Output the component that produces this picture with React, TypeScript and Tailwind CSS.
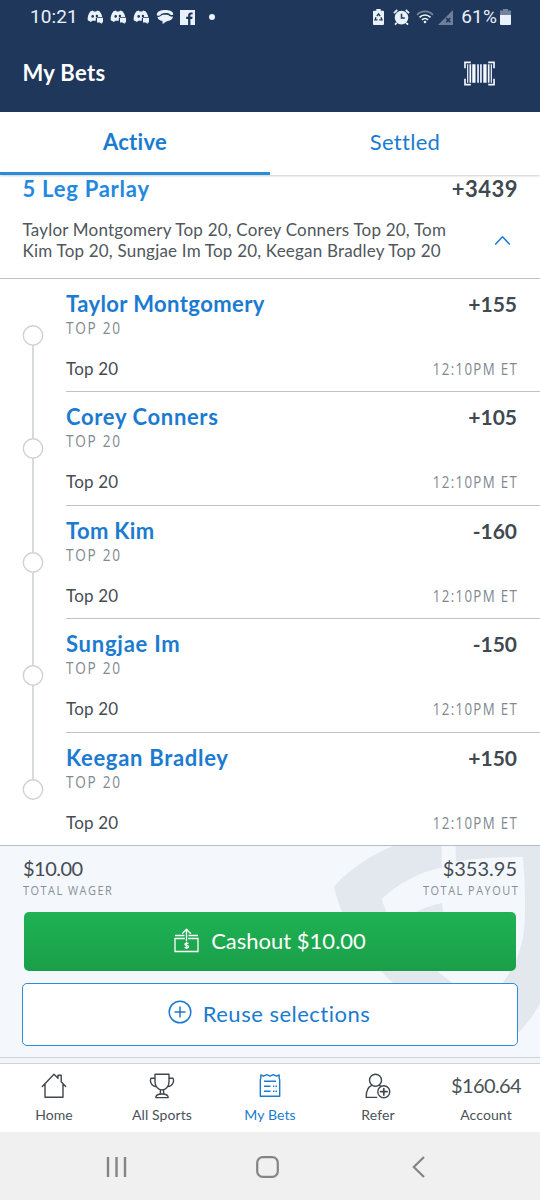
import React from "react";

const LEGS = [
  { name: "Taylor Montgomery", odds: "+155", nameTrack: "tracking-[0.4px]" },
  { name: "Corey Conners", odds: "+105", nameTrack: "tracking-[0.65px]" },
  { name: "Tom Kim", odds: "-160", nameTrack: "tracking-[0.35px]" },
  { name: "Sungjae Im", odds: "-150", nameTrack: "tracking-[0.75px]" },
  { name: "Keegan Bradley", odds: "+150", nameTrack: "tracking-[0.7px]" },
];

function ChatIcon() {
  return (
    <svg width="17" height="16" viewBox="0 0 17 16" fill="#e9f1fb">
      <path d="M3.500 2.200 6 1.400l.7 1h2.600l.7-1 2.500.8c1.600 2 2.600 4 2.700 5.800H10l-1.200 1.300v2.400H5.200L4 13 .7 11.300C.4 7.800 1.300 4.800 3.500 2.200Z" />
      <circle cx="5.700" cy="7.400" r="1.300" fill="#1f375b" />
      <circle cx="9.900" cy="6.900" r="1.200" fill="#1f375b" />
      <path d="M10 8.800h6v4.600h-1.300v1.700l-2-1.700H10Z" />
    </svg>
  );
}

function PhoneBubbleIcon() {
  return (
    <svg width="18" height="16" viewBox="0 0 18 16" fill="#e9f1fb">
      <path d="M.8 5.200C1.400 2.200 5 1 9.200 1c4 0 7.200 1.200 8 3.400.2 1.200-.4 1.800-1.600 1.700-1.500-.1-1.600-1.400-2.600-1.700-2.500-.8-5.500-.5-7.300.3C4.600 5.300 4.500 6.600 2.700 6.700 1.200 6.800.6 6.200.8 5.200Z" />
      <path d="M1.500 8c2 .3 3-.8 4.600-1.900 1.800-.5 4.300-.5 6.200-.1 1.300 1.200 2.700 1.900 4.600 1.600-.1 2.800-2.900 4.500-6.500 4.800L6.700 15l-.3-2.900C3.600 11.600 1.600 10 1.500 8Z" />
    </svg>
  );
}

function StatusBar() {
  return (
    <div className="flex h-[34px] items-center justify-between pl-[30px] pr-[29px] font-['Roboto',sans-serif] text-[19px] leading-[34px] text-[#e9f1fb]">
      <div className="flex items-center">
        <span className="w-[57px] tracking-[0.1px]">10:21</span>
        <div className="flex items-center gap-[6px]">
          <ChatIcon />
          <ChatIcon />
          <ChatIcon />
          <PhoneBubbleIcon />
          <svg width="15" height="15" viewBox="0 0 15 15">
            <path fill="#e9f1fb" d="M0 0h15v15H0z" />
            <path d="M8.100 15V9H6.200V6.800h1.900V5.300c0-1.900 1.100-2.900 2.900-2.900h1.600v2.200h-1.200c-.8 0-1 .4-1 1v1.200h2.200L12.200 9h-1.800v6Z" fill="#1f375b" />
          </svg>
        </div>
        <span className="ml-[14px] size-[6px] rounded-full bg-[#e9f1fb]" />
      </div>
      <div className="flex items-center">
        <svg width="11" height="16" viewBox="0 0 11 16">
          <path fill="#e9f1fb" d="M3.300 0h4.400v1.700H10a1 1 0 0 1 1 1V15a1 1 0 0 1-1 1H1a1 1 0 0 1-1-1V2.700a1 1 0 0 1 1-1h2.300Z" />
          <path d="m3.900 7.200 1.600-2.400 1.600 2.400M8 8.300l1 2.600H6.300M4.600 10.900H2l1-2.600" fill="none" stroke="#1f375b" strokeWidth="1.300" />
        </svg>
        <svg className="ml-[9px]" width="17" height="17" viewBox="0 0 17 17" fill="none" stroke="#e9f1fb">
          <circle cx="8.500" cy="8.600" r="6.800" fill="#e9f1fb" stroke="none" />
          <path d="M.9 4.200 4.200 1M16.100 4.200 12.800 1M3.800 13.800 2 15.700M13.200 13.800l1.800 1.900" strokeWidth="1.800" />
          <path d="M8.500 4.700v4.200h3.300" stroke="#1f375b" strokeWidth="1.500" />
        </svg>
        <svg className="ml-[6px]" width="18" height="14" viewBox="0 0 18 14" fill="none" strokeWidth="1.700">
          <path d="M1 4.800C5.500.2 12.500.2 17 4.800" stroke="#75869f" />
          <path d="M3.500 7.300c3.100-3.100 7.900-3.100 11 0M6 9.800c1.700-1.700 4.300-1.700 6 0" stroke="#e9f1fb" />
          <circle cx="9" cy="12" r="1.300" fill="#e9f1fb" stroke="none" />
        </svg>
        <svg className="ml-[4px]" width="15" height="15" viewBox="0 0 15 15">
          <path d="M15 0v15H0Z" fill="#6e809b" />
          <path d="m8.200 8 4 4.200m0-4.200-4 4.200" stroke="#1f375b" strokeWidth="1.700" />
        </svg>
        <span className="ml-[8px] mr-[1px] tracking-[0.2px]">61%</span>
        <svg className="ml-[2px]" width="11" height="16" viewBox="0 0 11 16">
          <path fill="#72839d" d="M3 0h5v1.500h3V7H0V1.500h3Z" />
          <path fill="#e9f1fb" d="M0 6h11v9a1 1 0 0 1-1 1H1a1 1 0 0 1-1-1Z" />
        </svg>
      </div>
    </div>
  );
}

function BarcodeIcon() {
  return (
    <svg width="31" height="25" viewBox="0 0 32 25" fill="none" stroke="#f4f8ff">
      <path d="M7 1H1v6M25 1h6v6M7 24H1v-6M25 24h6v-6" strokeWidth="1.700" />
      <path d="M3.800 3v19M28.200 3v19" strokeWidth="1.200" />
      <path d="M6.500 3v19M14.500 3v19M17.500 3v19M25.500 3v19" strokeWidth="1.700" />
      <path d="M10.200 3v19M21.600 3v19" strokeWidth="3.400" />
    </svg>
  );
}

function ShieldWatermark() {
  return (
    <svg className="absolute inset-0" width="540" height="211" viewBox="0 846 540 211" fill="#e3e7ee">
      <path d="M334 887c9-12 34-31 59-41h48.700v21.300c-22 5-43 16-60 31.700 9 31 36 58 71 84l-25 28c-45-33-80-68-93.700-124Z" />
      <path d="M455.700 846H540v157c-6 12-13 21-23 31l-40-24c24-20 43-47 47-79 2-22 1-49-1-74-23 0-45 1-67.300 4.500Z" />
      <path d="M404 918c12-7 24-12 38-15l4 38Z" />
    </svg>
  );
}

function Leg({ leg, first, last }: { leg: (typeof LEGS)[number]; first: boolean; last: boolean }) {
  return (
    <div className="flex h-[113.400px] shrink-0 pl-[22px]">
      <div className="flex w-[44px] shrink-0 flex-col">
        <span className={`ml-[10px] h-[46px] w-[2px] ${first ? "bg-transparent" : "bg-[#d8dbde]"}`} />
        <svg className="shrink-0" width="22" height="21" viewBox="0 0 22 21" fill="none" stroke="#ced1d6" strokeWidth="1.400">
          <circle cx="11" cy="10.500" r="9.700" />
        </svg>
        <span className={`ml-[10px] w-[2px] flex-1 ${last ? "bg-transparent" : "bg-[#d8dbde]"}`} />
      </div>
      <div className={`flex flex-1 flex-col pr-[23px] ${last ? "" : "border-b border-[#bcc4c9]"}`}>
        <div className="flex justify-between pt-[11px] text-[22px] font-bold leading-[28px]">
          <span className={`text-[#1b7bd0] ${leg.nameTrack}`}>{leg.name}</span>
          <span className="text-[21px] text-[#404950]">{leg.odds}</span>
        </div>
        <span className="origin-left scale-x-[0.84] font-['Open_Sans',sans-serif] text-[16.200px] leading-[21px] tracking-[2.100px] text-[#808890]">TOP 20</span>
        <div className="mt-[19px] flex justify-between leading-[22px]">
          <span className="text-[17px] tracking-[0.2px] text-[#464c52]">Top 20</span>
          <span className="origin-right translate-x-[1px] scale-x-[0.82] font-['Open_Sans',sans-serif] text-[16.200px] tracking-[1.650px] text-[#808890]">12:10PM ET</span>
        </div>
      </div>
    </div>
  );
}

function HomeIcon() {
  return (
    <svg width="26" height="26" viewBox="0 0 26 26" fill="none" stroke="#3f474d" strokeWidth="1.400" strokeLinejoin="round" strokeLinecap="round">
      <path d="M1.300 13.500 13 1.300l4 4V2.300h3.200v6.500L24.700 13.500M4 11v13.300h18V11" />
    </svg>
  );
}

function TrophyIcon() {
  return (
    <svg width="26" height="26" viewBox="0 0 26 26" fill="none" stroke="#3f474d" strokeWidth="1.400" strokeLinejoin="round">
      <path d="M6 1.300h14v7.500c0 4.200-3.100 8.100-7 8.100s-7-3.900-7-8.100ZM6 5.300H2c-1.500 3 .4 8.200 5.100 8.200M20 5.300h4c1.500 3-.4 8.200-5.100 8.200M11.400 17v4M14.600 17v4M6.800 24.600c0-2.400 2.300-3.600 6.200-3.600s6.200 1.200 6.200 3.600Z" />
    </svg>
  );
}

function TicketIcon() {
  return (
    <svg className="-mt-[2px]" width="22" height="25" viewBox="0 0 22 25" fill="none" stroke="#1b7bd0" strokeWidth="1.400">
      <path d="M1.300 23.300V6.500L1.800 5.500V2l2.700 1.200 3.200-1.600L11 3.200l3.300-1.600 3.200 1.600L20.200 2v3.500l.5 1v16.800Z" strokeLinejoin="round" />
      <path d="M5 8.200h12M5 13.200h6.500M5 18.300h6.500M14 13.200h1.400M16.500 13.200H18M14 18.300h1.400M16.500 18.300H18" />
    </svg>
  );
}

function ReferIcon() {
  return (
    <svg width="26" height="26" viewBox="0 0 26 26" fill="none" stroke="#3f474d" strokeWidth="1.400" strokeLinecap="round">
      <circle cx="10.500" cy="7.200" r="6" />
      <path d="M7 12.200c-4 2-6 6-5.800 12.200h10.500M14.200 12.100l1.200.8" />
      <circle cx="18.800" cy="18.700" r="6" />
      <path d="M18.800 15.500v6.400M15.600 18.700H22" strokeWidth="1.700" />
    </svg>
  );
}

function NavItem({ icon, label, active }: { icon: React.ReactNode; label: string; active?: boolean }) {
  return (
    <div className={`flex w-[108px] flex-col items-center pt-[8px] ${active ? "text-[#1b7bd0]" : "text-[#4b5258]"}`}>
      <div className="flex h-[28px] items-center justify-center">{icon}</div>
      <span className="mt-[6px] whitespace-nowrap text-[14px] leading-[18px] tracking-[0.1px]">{label}</span>
    </div>
  );
}

export default function App() {
  return (
    <div className="flex h-[1200px] w-[540px] flex-col overflow-hidden bg-white font-['Lato',sans-serif]">
      <header className="h-[112px] shrink-0 bg-[#1f375b]">
        <StatusBar />
        <div className="flex h-[78px] items-center justify-between pl-[22.500px] pr-[45px]">
          <h1 className="text-[22px] font-bold leading-[28px] tracking-[0.3px] text-white">My Bets</h1>
          <BarcodeIcon />
        </div>
      </header>
      <nav className="z-10 flex h-[63px] shrink-0 bg-white text-center text-[22px] leading-[60px] text-[#1b7bd0] shadow-[0_1px_2px_rgba(0,0,0,0.2)]">
        <div className="flex-1 border-b-[3px] border-[#288bdc] font-bold tracking-[0.3px]">Active</div>
        <div className="flex-1 tracking-[0.3px]">Settled</div>
      </nav>
      <section className="h-[104px] shrink-0 border-b border-[#bcc4c9] pl-[22.500px] pr-[22px]">
        <div className="flex justify-between text-[22px] font-bold leading-[28px]">
          <span className="tracking-[0.75px] text-[#2389df]">5 Leg Parlay</span>
          <span className="tracking-[0.5px] text-[#404950]">+3439</span>
        </div>
        <div className="mt-[16px] flex items-start justify-between text-[17px] leading-[21px] text-[#4f565c]">
          <p className="whitespace-nowrap tracking-[0.2px]">
            Taylor Montgomery Top 20, Corey Conners Top 20, Tom
            <br />
            Kim Top 20, Sungjae Im Top 20, Keegan Bradley Top 20
          </p>
          <svg className="mr-[7px] mt-[16px]" width="17" height="11" viewBox="0 0 17 11" fill="none" stroke="#1b7bd0" strokeWidth="1.600">
            <path d="m1.200 9.500 7.300-7.700 7.300 7.700" />
          </svg>
        </div>
      </section>
      <section className="flex h-[566px] shrink-0 flex-col">
        {LEGS.map((leg, i) => (
          <Leg key={leg.name} leg={leg} first={i === 0} last={i === LEGS.length - 1} />
        ))}
      </section>
      <section className="relative h-[213px] shrink-0 border-y border-t-[#b5bec6] border-b-[#cdd4db] bg-[#f4f8fd]">
        <ShieldWatermark />
        <div className="relative px-[22px]">
          <div className="flex justify-between px-[1px] pt-[10px] text-[20px] leading-[24px] text-[#454c53]">
            <span className="tracking-[-0.5px]">$10.00</span>
            <span>$353.95</span>
          </div>
          <div className="mt-px flex justify-between font-['Open_Sans',sans-serif] text-[13.300px] leading-[18px] tracking-[1.850px] text-[#868d96]">
            <span className="origin-left translate-x-[1px] scale-x-[0.82]">TOTAL WAGER</span>
            <span className="origin-right translate-x-[1px] scale-x-[0.82]">TOTAL PAYOUT</span>
          </div>
          <button className="mx-[2px] mt-[13px] flex h-[59px] w-[492px] items-center justify-center gap-[12px] rounded-[5px] bg-linear-to-b from-[#1fb254] to-[#1a9f49] text-[22px] text-white">
            <svg className="-mt-[3px]" width="25" height="25" viewBox="0 0 25 25" fill="none" stroke="white" strokeWidth="1.300">
              <path d="M10.800 10.500H1v13h23v-13h-9.800M1 7.500h9.500M14.500 7.500H24M12.500 13V1.500M8.200 5.800l4.300-4.500 4.300 4.500" />
              <path d="M14.400 15.600c-.6-.7-3.500-.9-3.500.6 0 1.700 3.700.7 3.700 2.500 0 1.500-3.100 1.400-3.900.5M12.600 13.700v7.400" />
            </svg>
            <span className="-mt-[2px] leading-[28px]">Cashout $10.00</span>
          </button>
          <button className="mt-[12px] flex h-[62.500px] w-full items-center justify-center gap-[11px] rounded-[5px] border-[1.500px] border-[#318ade] bg-white pr-[2px] text-[22px] text-[#1b7bd0]">
            <svg className="-mt-[5px]" width="24" height="24" viewBox="0 0 24 24" fill="none" stroke="#1b7bd0" strokeWidth="1.500">
              <circle cx="12" cy="12" r="10.800" />
              <path d="M12 6.500v11M6.500 12h11" />
            </svg>
            <span className="-mt-[1px] leading-[28px] tracking-[0.5px]">Reuse selections</span>
          </button>
        </div>
      </section>
      <div className="h-[5px] shrink-0 bg-[#f1f5f9]" />
      <nav className="flex h-[69px] shrink-0 border-t border-[#ccd3d9] bg-white">
        <NavItem icon={<HomeIcon />} label="Home" />
        <NavItem icon={<TrophyIcon />} label="All Sports" />
        <NavItem icon={<TicketIcon />} label="My Bets" active />
        <NavItem icon={<ReferIcon />} label="Refer" />
        <NavItem icon={<span className="-mt-[2px] text-[20px] tracking-[-0.6px]">$160.64</span>} label="Account" />
      </nav>
      <footer className="flex h-[68px] shrink-0 items-center bg-[#f0f0f0] pl-[106px] pt-[2px]">
        <svg width="21" height="22" viewBox="0 0 21 22" stroke="#848484" strokeWidth="2.400">
          <path d="M2 1v20M10.500 1v20M19 1v20" />
        </svg>
        <svg className="ml-[129px]" width="23" height="22" viewBox="0 0 23 22" fill="none" stroke="#848484" strokeWidth="2.200">
          <rect x="1.200" y="1.200" width="20.600" height="19.600" rx="5.500" />
        </svg>
        <svg className="ml-[133px]" width="13" height="22" viewBox="0 0 13 22" fill="none" stroke="#848484" strokeWidth="2.200">
          <path d="M12 1 1.800 11 12 21" />
        </svg>
      </footer>
    </div>
  );
}
